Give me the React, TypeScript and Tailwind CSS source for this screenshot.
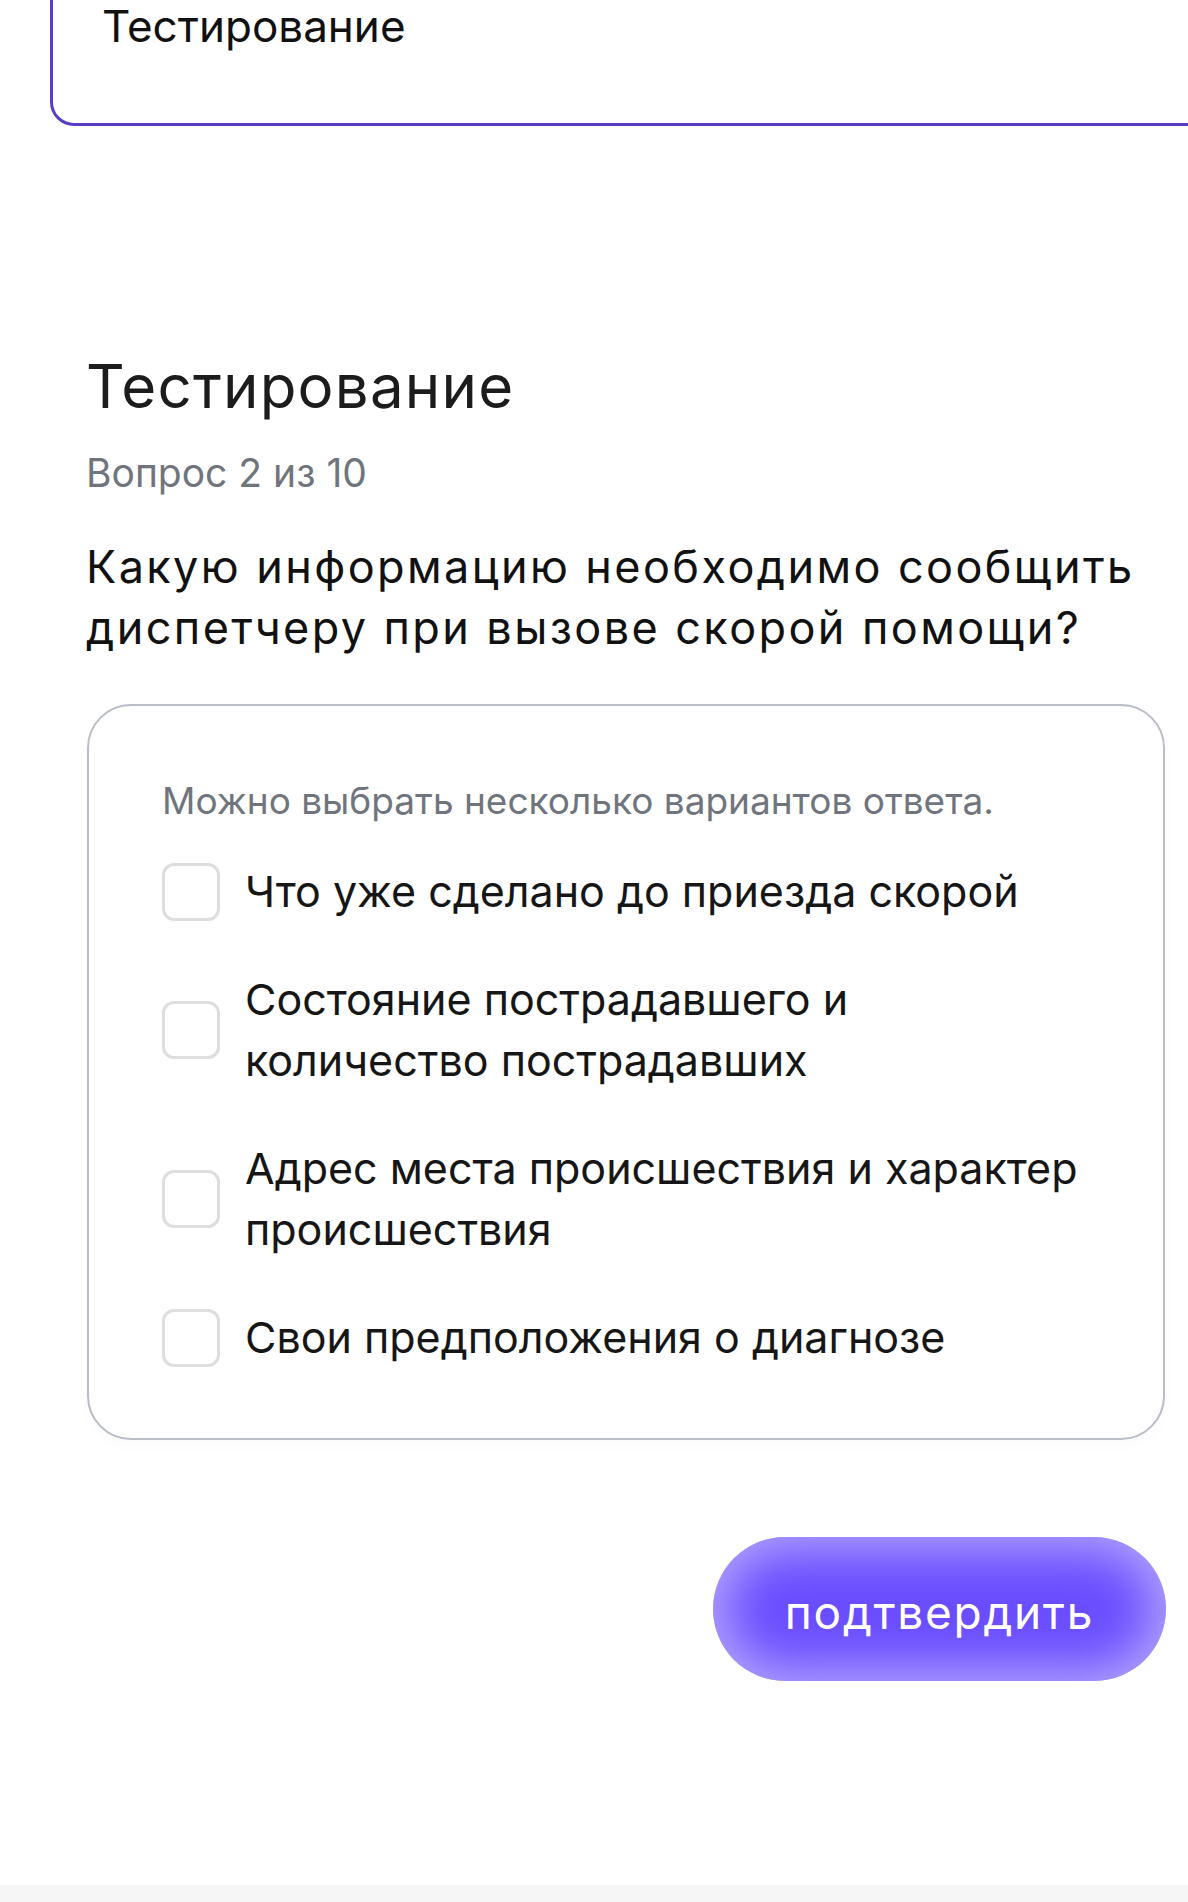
import React from "react";

const options: React.ReactNode[] = [
  "Что уже сделано до приезда скорой",
  <>Состояние пострадавшего и<br />количество пострадавших</>,
  <>Адрес места происшествия и характер<br />происшествия</>,
  "Свои предположения о диагнозе",
];

export default function App() {
  return (
    <div className="relative flex h-[1902px] w-[1188px] flex-col overflow-hidden bg-white font-['Inter','Noto_Sans',sans-serif] text-[#161616]">
      <div className="ml-[50px] mt-[-60px] h-[186px] w-[1200px] shrink-0 rounded-[24px] border-[3px] border-[#5a3cc8] pl-[49px] pt-[61px] text-[44px] leading-[44px] text-[#111]">
        Тестирование
      </div>

      <h1 className="ml-[86px] mt-[231px] text-[60px] font-normal leading-[58px] tracking-[1.2px] text-[#1c1c1c]">
        Тестирование
      </h1>

      <div className="ml-[86px] mt-[38px] text-[39px] leading-[39px] text-[#70757d]">
        Вопрос 2 из 10
      </div>

      <div className="ml-[86px] mt-[44px] text-[45px] leading-[61px] tracking-[2.4px] text-[#111]">
        Какую информацию необходимо сообщить
        <br />
        диспетчеру при вызове скорой помощи?
      </div>

      <div className="ml-[87px] mt-[46px] w-[1078px] shrink-0 rounded-[44px] border-2 border-[#b9bdc5] px-[73px] pb-[70px] pt-[73px] shadow-[0_6px_14px_rgba(0,0,0,0.02)]">
        <div className="text-[37px] leading-[44px] text-[#70757d]">
          Можно выбрать несколько вариантов ответа.
        </div>
        <div className="mt-[38px] flex flex-col gap-[47px]">
          {options.map((o, i) => (
            <label key={i} className="flex items-center gap-[25px]">
              <span className="h-[58px] w-[58px] shrink-0 rounded-[12px] border-[3px] border-[#dedede] bg-white" />
              <span className="text-[43px] leading-[61px] text-[#161616]">{o}</span>
            </label>
          ))}
        </div>
      </div>

      <button className="mr-[22px] mt-[97px] flex h-[144px] w-[453px] shrink-0 items-center justify-center self-end rounded-full bg-[#6a4dff] pt-[6px] text-[46px] leading-[46px] tracking-[1.7px] text-white shadow-[inset_0_0_50px_12px_rgba(255,255,255,0.5)]">
        подтвердить
      </button>

      <div className="mt-auto h-[17px] w-full shrink-0 bg-[#f6f6f6]" />
    </div>
  );
}
